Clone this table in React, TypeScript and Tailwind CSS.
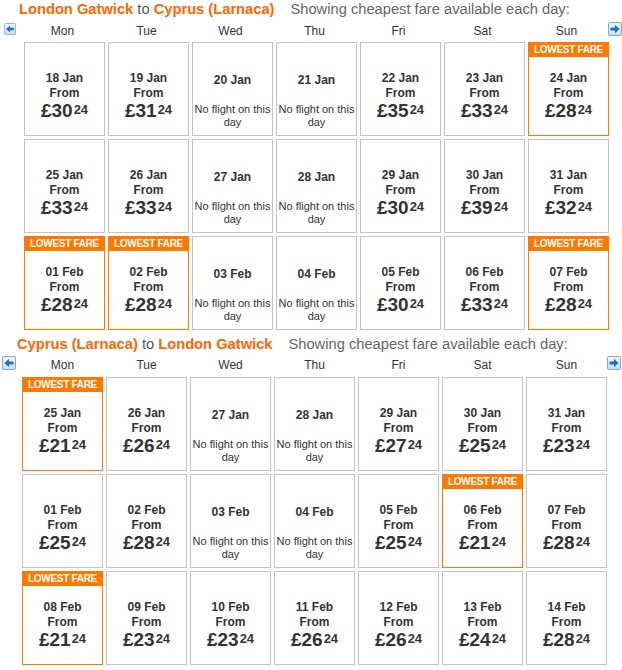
import React, { FC } from "react";

interface IDay {
  date: string;
  price?: number;
  lowest?: boolean;
}

const days = ["Mon", "Tue", "Wed", "Thu", "Fri", "Sat", "Sun"];

const outbound: IDay[] = [
  { date: "18 Jan", price: 30 },
  { date: "19 Jan", price: 31 },
  { date: "20 Jan" },
  { date: "21 Jan" },
  { date: "22 Jan", price: 35 },
  { date: "23 Jan", price: 33 },
  { date: "24 Jan", price: 28, lowest: true },
  { date: "25 Jan", price: 33 },
  { date: "26 Jan", price: 33 },
  { date: "27 Jan" },
  { date: "28 Jan" },
  { date: "29 Jan", price: 30 },
  { date: "30 Jan", price: 39 },
  { date: "31 Jan", price: 32 },
  { date: "01 Feb", price: 28, lowest: true },
  { date: "02 Feb", price: 28, lowest: true },
  { date: "03 Feb" },
  { date: "04 Feb" },
  { date: "05 Feb", price: 30 },
  { date: "06 Feb", price: 33 },
  { date: "07 Feb", price: 28, lowest: true },
];

const inbound: IDay[] = [
  { date: "25 Jan", price: 21, lowest: true },
  { date: "26 Jan", price: 26 },
  { date: "27 Jan" },
  { date: "28 Jan" },
  { date: "29 Jan", price: 27 },
  { date: "30 Jan", price: 25 },
  { date: "31 Jan", price: 23 },
  { date: "01 Feb", price: 25 },
  { date: "02 Feb", price: 28 },
  { date: "03 Feb" },
  { date: "04 Feb" },
  { date: "05 Feb", price: 25 },
  { date: "06 Feb", price: 21, lowest: true },
  { date: "07 Feb", price: 28 },
  { date: "08 Feb", price: 21, lowest: true },
  { date: "09 Feb", price: 23 },
  { date: "10 Feb", price: 23 },
  { date: "11 Feb", price: 26 },
  { date: "12 Feb", price: 26 },
  { date: "13 Feb", price: 24 },
  { date: "14 Feb", price: 28 },
];

const ArrowButton: FC<{ right?: boolean }> = ({ right }) => (
  <svg width="14" height="14" viewBox="0 0 14 14" className="block">
    <defs>
      <linearGradient id={right ? "gr" : "gl"} x1="0" y1="0" x2="0" y2="1">
        <stop offset="0" stopColor="#f2f8fd" />
        <stop offset="1" stopColor="#c9def2" />
      </linearGradient>
    </defs>
    <rect x="0.5" y="0.5" width="13" height="13" rx="1.5" fill={`url(#${right ? "gr" : "gl"})`} stroke="#7fa9d3" />
    <g transform={right ? "translate(14,0) scale(-1,1)" : undefined}>
      <polygon points="2.5,7 7,2.8 7,11.2" fill="#1c72c2" />
      <rect x="6.5" y="5.5" width="5" height="3" fill="#1c72c2" />
    </g>
  </svg>
);

const Cell: FC<{ d: IDay }> = ({ d }) => {
  if (!d.price) {
    return (
      <div className="h-[94px] border border-[#c4c4c4] bg-white flex flex-col items-center pt-[30px] text-[#333]">
        <div className="text-[12px] font-bold leading-[15px]">{d.date}</div>
        <div className="mt-[15px] text-[11px] leading-[13px] text-center">No flight on this day</div>
      </div>
    );
  }
  return (
    <div
      className={`relative h-[94px] border bg-white flex flex-col items-center pt-[28px] text-[#333] ${
        d.lowest ? "border-[#ff7800]" : "border-[#c4c4c4]"
      }`}
    >
      {d.lowest && (
        <div className="absolute top-0 left-0 right-0 h-[14px] bg-[#ff7800] text-white text-[10px] font-bold leading-[13px] text-center tracking-[-0.3px]">
          LOWEST FARE
        </div>
      )}
      <div className="text-[12px] font-bold leading-[15px]">{d.date}</div>
      <div className="text-[12px] font-bold leading-[15px]">From</div>
      <div className="flex items-start leading-[20px]">
        <span className="text-[19px] font-bold">£{d.price}</span>
        <span className="text-[13px] font-bold leading-[15px] mt-[1px] ml-[1px]">24</span>
      </div>
    </div>
  );
};

const Section: FC<{
  from: string;
  to: string;
  data: IDay[];
  pad: string;
  head: string;
  gapR: string;
}> = ({ from, to, data, pad, head, gapR }) => (
  <div className={pad}>
    <div className="h-[20px] leading-[18px] text-[14.7px] pl-[15px] flex">
      <span className="font-bold text-[#ff6600]">{from}</span>
      <span className="text-[#555]">&nbsp;to&nbsp;</span>
      <span className="font-bold text-[#ff6600]">{to}</span>
      <span className="ml-[16px] text-[#666]">Showing cheapest fare available each day:</span>
    </div>
    <div className={`flex items-start ${head}`}>
      <ArrowButton />
      <div className="ml-[6px]">
        <div className="grid grid-cols-[repeat(7,81px)] gap-x-[3px] text-[12px] leading-[18px] text-[#333] text-center">
          {days.map((n) => (
            <div key={n}>{n}</div>
          ))}
        </div>
      </div>
      <div className={gapR}>
        <ArrowButton right />
      </div>
    </div>
    <div className="pl-[20px] grid grid-cols-[repeat(7,81px)] gap-[3px]">
      {data.map((d, i) => (
        <Cell key={i} d={d} />
      ))}
    </div>
  </div>
);

export default function App() {
  return (
    <div className="w-[622px] h-[670px] overflow-hidden bg-white font-['Liberation_Sans',Arial,sans-serif]">
      <Section
        from="London Gatwick"
        to="Cyprus (Larnaca)"
        data={outbound}
        pad="pl-[4px]"
        head="mt-[2px] h-[20px]"
        gapR="ml-[1px]"
      />
      <div className="mt-[5px]">
        <Section
          from="Cyprus (Larnaca)"
          to="London Gatwick"
          data={inbound}
          pad="pl-[2px]"
          head="mt-[1px] h-[21px]"
          gapR="ml-0"
        />
      </div>
    </div>
  );
}
